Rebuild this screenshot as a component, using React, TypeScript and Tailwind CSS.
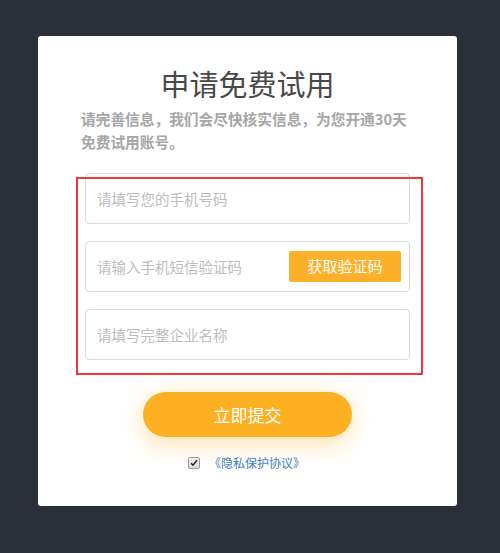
import { useState } from 'react'

const FONT = { fontFamily: '"Microsoft YaHei", "Noto Sans CJK SC", "Noto Sans", sans-serif' }

function Field({ placeholder, children }: { placeholder: string; children?: React.ReactNode }) {
  return (
    <div className="h-[51px] flex items-center rounded-[4px] border border-[#dcdcdc] bg-white pl-[11px] pr-[8px]">
      <input
        placeholder={placeholder}
        className="flex-1 min-w-0 bg-transparent text-[14.5px] text-[#333] outline-none placeholder:text-[#bdbdbd]"
      />
      {children}
    </div>
  )
}

export default function App() {
  const [agree, setAgree] = useState(true)

  return (
    <div className="w-[500px] h-[553px] bg-[#2b2f38] pt-[36px] pl-[38px]" style={FONT}>
      <div className="relative w-[419px] h-[470px] rounded-[3px] bg-white pt-[29px]">
        <h1 className="text-center text-[29px] leading-[36px] text-[#484848]">申请免费试用</h1>
        <p className="mt-[6px] ml-[43px] w-[335px] text-[14.7px] leading-[23px] font-bold text-[#a6a6a6]">
          请完善信息，我们会尽快核实信息，为您开通30天免费试用账号。
        </p>

        <div className="mx-[47px] mt-[20px] flex flex-col gap-[17px]">
          <Field placeholder="请填写您的手机号码" />
          <Field placeholder="请输入手机短信验证码">
            <button className="h-[31px] w-[112px] shrink-0 rounded-[2px] bg-[#fdb02a] text-[15px] text-white">
              获取验证码
            </button>
          </Field>
          <Field placeholder="请填写完整企业名称" />
        </div>

        <div className="mt-[32px] flex justify-center">
          <button className="h-[45px] w-[209px] rounded-full bg-[#fdb022] text-[17px] text-white shadow-[0_6px_26px_rgba(253,176,34,0.4)]">
            立即提交
          </button>
        </div>

        <div className="mt-[16px] h-[20px] flex items-center gap-[9px] pl-[150px]">
          <span
            onClick={() => setAgree(a => !a)}
            className="h-[12px] w-[12px] flex items-center justify-center rounded-[2px] border border-[#9a9a9a] bg-gradient-to-b from-[#f4f4f4] to-[#dcdcdc]"
          >
            {agree && (
              <svg viewBox="0 0 12 12" className="h-[10px] w-[10px]">
                <path d="M2.5 6.2 L4.8 8.6 L9.6 2.8" fill="none" stroke="#222" strokeWidth="1.8" />
              </svg>
            )}
          </span>
          <a className="text-[12px] leading-[20px] text-[#3b7dc4]">《隐私保护协议》</a>
        </div>

        {/* annotation box */}
        <div className="absolute left-[38px] top-[141px] w-[347px] h-[198px] border-2 border-[#f33636] pointer-events-none" />
      </div>
    </div>
  )
}
